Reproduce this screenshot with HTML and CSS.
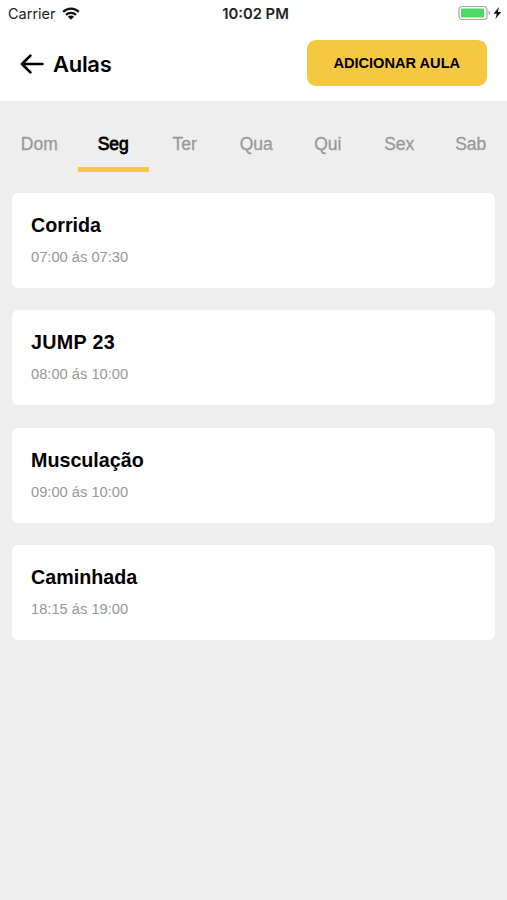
FILE: index.html
```html
<!DOCTYPE html>
<html lang="pt-BR">
<head>
<meta charset="utf-8">
<title>Aulas</title>
<link rel="stylesheet" href="styles.css">
</head>
<body>
<div class="status">
  <div class="carrier"><span class="carrier-name">Carrier</span>
    <svg class="wifi" width="18" height="13" viewBox="0 0 18 13"><g fill="none" stroke="#111" stroke-width="2.2"><path d="M1.2 4.9a11 11 0 0 1 15.6 0"/><path d="M4 7.9a7.1 7.1 0 0 1 10 0"/></g><path d="M5.9 9.7a4.4 4.4 0 0 1 6.2 0L9 12.8z" fill="#111"/></svg>
  </div>
  <div class="clock">10:02 PM</div>
  <div class="power">
    <svg width="44" height="16" viewBox="0 0 44 16"><rect x="1" y="1.5" width="28" height="13" rx="3.2" fill="#fff" stroke="#aaa" stroke-width="1.2"/><rect x="3" y="3.5" width="23" height="9" rx="1" fill="#4cd964"/><path d="M30.6 5.8q1.8.6 1.8 2.2t-1.8 2.2z" fill="#aaa"/><path d="M41 2l-5.4 6.8h3.2l-1.4 5.2 5.8-6.9h-3.3z" fill="#111"/></svg>
  </div>
</div>
<header class="header">
  <svg class="back" width="24" height="20" viewBox="0 0 24 20"><path d="M10.4 1.6L2 10l8.4 8.4M2.2 10H22.4" fill="none" stroke="#000" stroke-width="2.7" stroke-linecap="round" stroke-linejoin="round"/></svg>
  <h1 class="title">Aulas</h1>
  <button class="add">ADICIONAR AULA</button>
</header>
<nav class="tabs">
  <span class="tab first">Dom</span>
  <span class="tab active">Seg</span>
  <span class="tab">Ter</span>
  <span class="tab">Qua</span>
  <span class="tab">Qui</span>
  <span class="tab">Sex</span>
  <span class="tab">Sab</span>
</nav>
<main class="list">
  <article class="card"><h2 class="name">Corrida</h2><p class="time">07:00 ás 07:30</p></article>
  <article class="card"><h2 class="name wide">JUMP 23</h2><p class="time">08:00 ás 10:00</p></article>
  <article class="card"><h2 class="name">Musculação</h2><p class="time">09:00 ás 10:00</p></article>
  <article class="card"><h2 class="name">Caminhada</h2><p class="time">18:15 ás 19:00</p></article>
</main>
</body>
</html>
```
FILE: styles.css
```css
* { box-sizing: border-box; margin: 0; padding: 0; }
body { height: 900px; background: #eee; color: #000; font-family: "Liberation Sans", Arial, sans-serif; overflow: hidden; }
.status { display: grid; grid-template-columns: 1fr auto 1fr; grid-template-rows: 27px; align-items: center; height: 27px; padding: 0 5px 0 8px; background: #fff; font: 14.5px/27px Inter, sans-serif; color: #222; }
.carrier { display: flex; align-items: center; gap: 6px; }
.wifi { margin-top: -1px; }
.clock { font-weight: 600; font-size: 14.8px; line-height: 25px; padding: 2px 0 0 1px; }
.power { display: flex; justify-content: flex-end; margin-top: -1px; }
.header { display: flex; align-items: center; height: 74px; padding: 0 20px 2px; background: #fff; }
.title { margin: 2px 0 0 9px; font: 600 22px/30px Inter, sans-serif; letter-spacing: -.3px; }
.back { margin-top: 1px; }
.add { margin-left: auto; width: 180.5px; height: 46px; margin-bottom: 1px; border: 0; border-radius: 9px; background: #f5c842; color: #000; font: bold 14.6px/46px "Liberation Sans", Arial, sans-serif; }
.tabs { display: flex; height: 71px; padding: 18px 0 0 6px; }
.tab { width: 71.5px; flex: none; text-align: center; height: 53px; font-size: 17.5px; line-height: 50px; color: #999; -webkit-text-stroke: .3px #999; }
.first { padding-right: 5px; }
.active { color: #000; -webkit-text-stroke: .8px #000; border-bottom: 5px solid #f5c842; }
.list { display: flex; flex-direction: column; gap: 22.3px; padding: 21px 12px; }
.card { height: 95px; padding: 20px 19px; border-radius: 6px; background: #fff; }
.name { font-size: 19.7px; line-height: 24px; }
.wide { letter-spacing: .35px; }
.time { margin-top: 11px; font-size: 14.7px; line-height: 19px; color: #999; }
```
